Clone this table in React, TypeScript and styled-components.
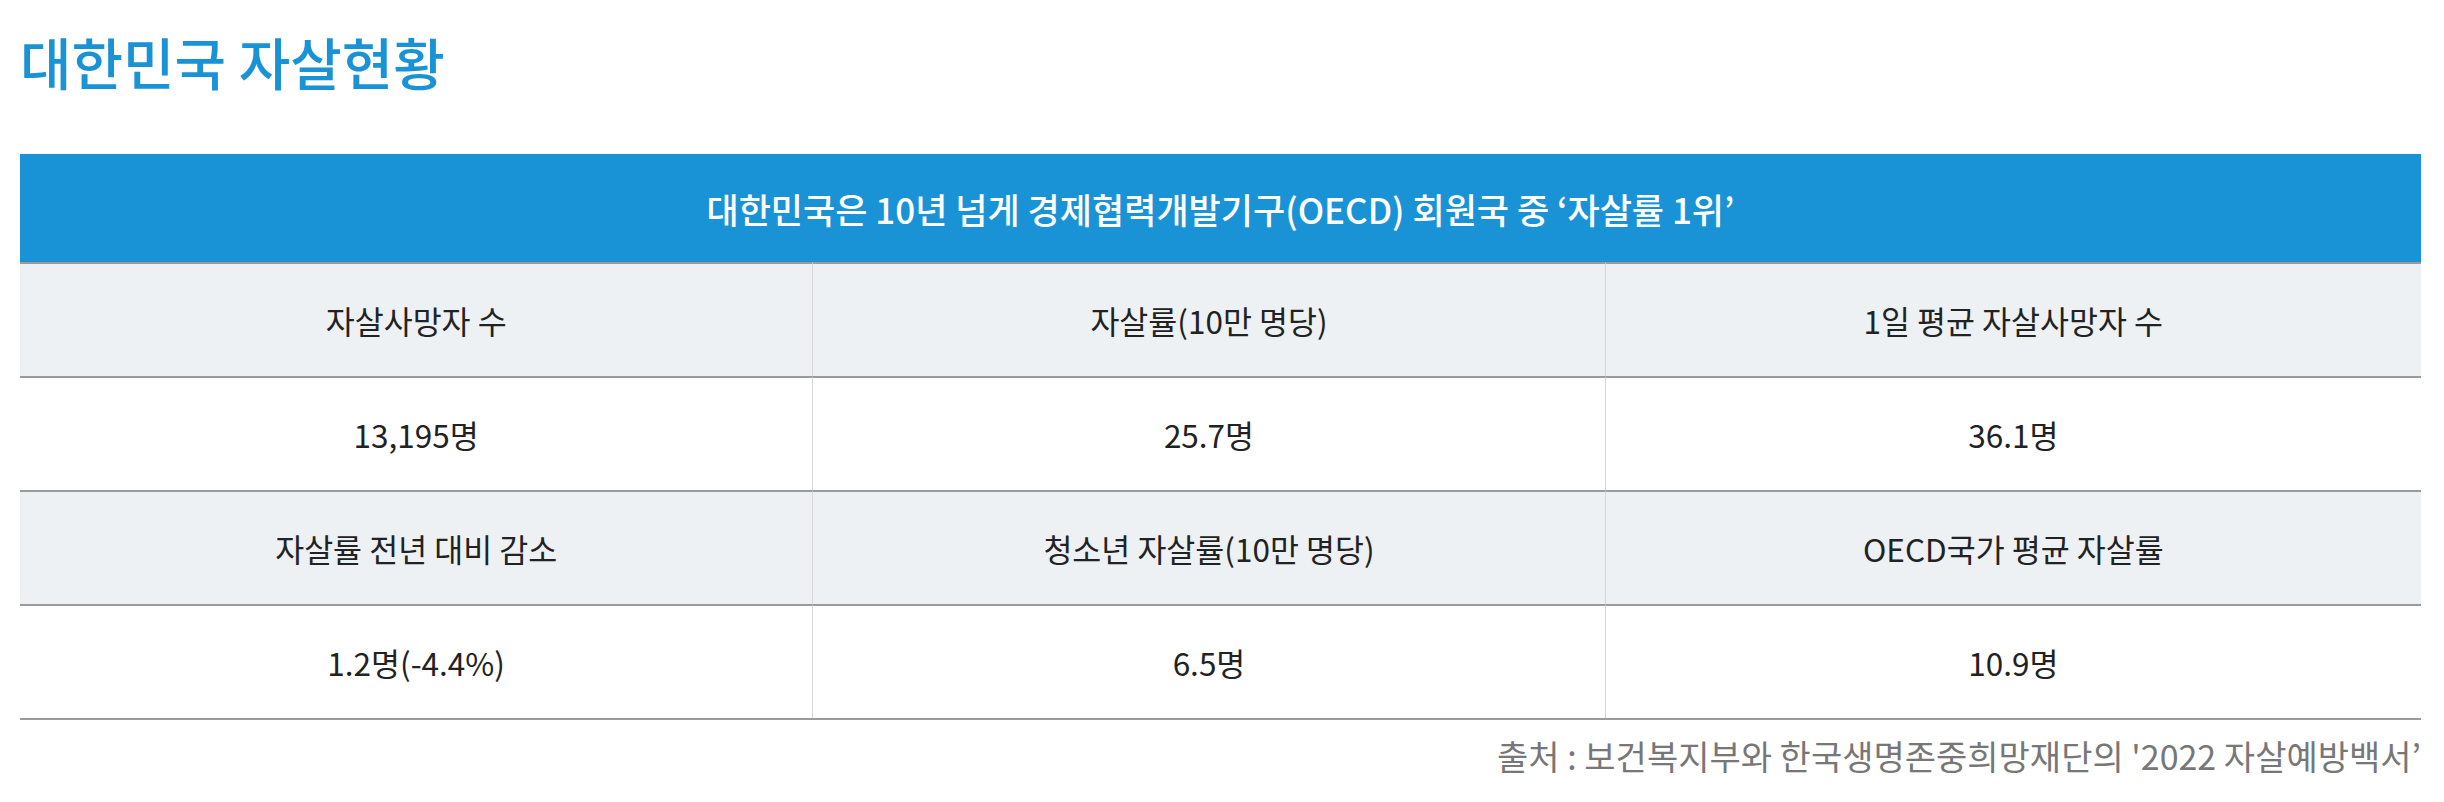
import React from "react";
import styled, { createGlobalStyle } from "styled-components";

const GlobalStyle = createGlobalStyle`
  html, body {
    margin: 0;
    padding: 0;
    background: #ffffff;
  }
  body {
    font-family: "Noto Sans CJK KR", "Noto Sans", sans-serif;
    color: #222222;
  }
`;

const Page = styled.main`
  padding: 0 23px 0 20px;
`;

const Title = styled.h2`
  margin: 0;
  padding-top: 21px;
  height: 154px;
  box-sizing: border-box;
  font-size: 56px;
  line-height: 80px;
  font-weight: 500;
  color: #1a93d6;
`;

const Table = styled.div`
  display: grid;
  grid-template-columns: 33% 33% 34%;
  border-bottom: 2px solid #9a9a9a;
`;

const Banner = styled.div`
  grid-column: 1 / -1;
  height: 108px;
  background: #1a93d6;
  color: #ffffff;
  display: flex;
  align-items: center;
  justify-content: center;
  font-size: 35px;
  font-weight: 500;
`;

const Cell = styled.div<{ $head?: boolean; $first?: boolean }>`
  height: 112px;
  border-top: 2px solid #9a9a9a;
  border-left: ${(p) => (p.$first ? "none" : "1px solid #d6d6d6")};
  background: ${(p) => (p.$head ? "#edf1f4" : "#ffffff")};
  display: flex;
  align-items: center;
  justify-content: center;
  font-size: 31.5px;
  font-weight: 400;
  color: #222222;
`;

const Source = styled.p`
  margin: 14px 0 0;
  text-align: right;
  font-size: 34px;
  line-height: 44px;
  color: #777777;
`;

type Stat = { label: string; value: string };

const rows: Stat[][] = [
  [
    { label: "자살사망자 수", value: "13,195명" },
    { label: "자살률(10만 명당)", value: "25.7명" },
    { label: "1일 평균 자살사망자 수", value: "36.1명" },
  ],
  [
    { label: "자살률 전년 대비 감소", value: "1.2명(-4.4%)" },
    { label: "청소년 자살률(10만 명당)", value: "6.5명" },
    { label: "OECD국가 평균 자살률", value: "10.9명" },
  ],
];

export default function App() {
  return (
    <>
      <GlobalStyle />
      <Page>
        <Title>대한민국 자살현황</Title>
        <Table>
          <Banner>대한민국은 10년 넘게 경제협력개발기구(OECD) 회원국 중 ‘자살률 1위’</Banner>
          {rows.map((group, gi) => (
            <React.Fragment key={gi}>
              {group.map((s, i) => (
                <Cell key={`h${i}`} $head $first={i === 0}>
                  {s.label}
                </Cell>
              ))}
              {group.map((s, i) => (
                <Cell key={`v${i}`} $first={i === 0}>
                  {s.value}
                </Cell>
              ))}
            </React.Fragment>
          ))}
        </Table>
        <Source>출처 : 보건복지부와 한국생명존중희망재단의 '2022 자살예방백서’</Source>
      </Page>
    </>
  );
}
